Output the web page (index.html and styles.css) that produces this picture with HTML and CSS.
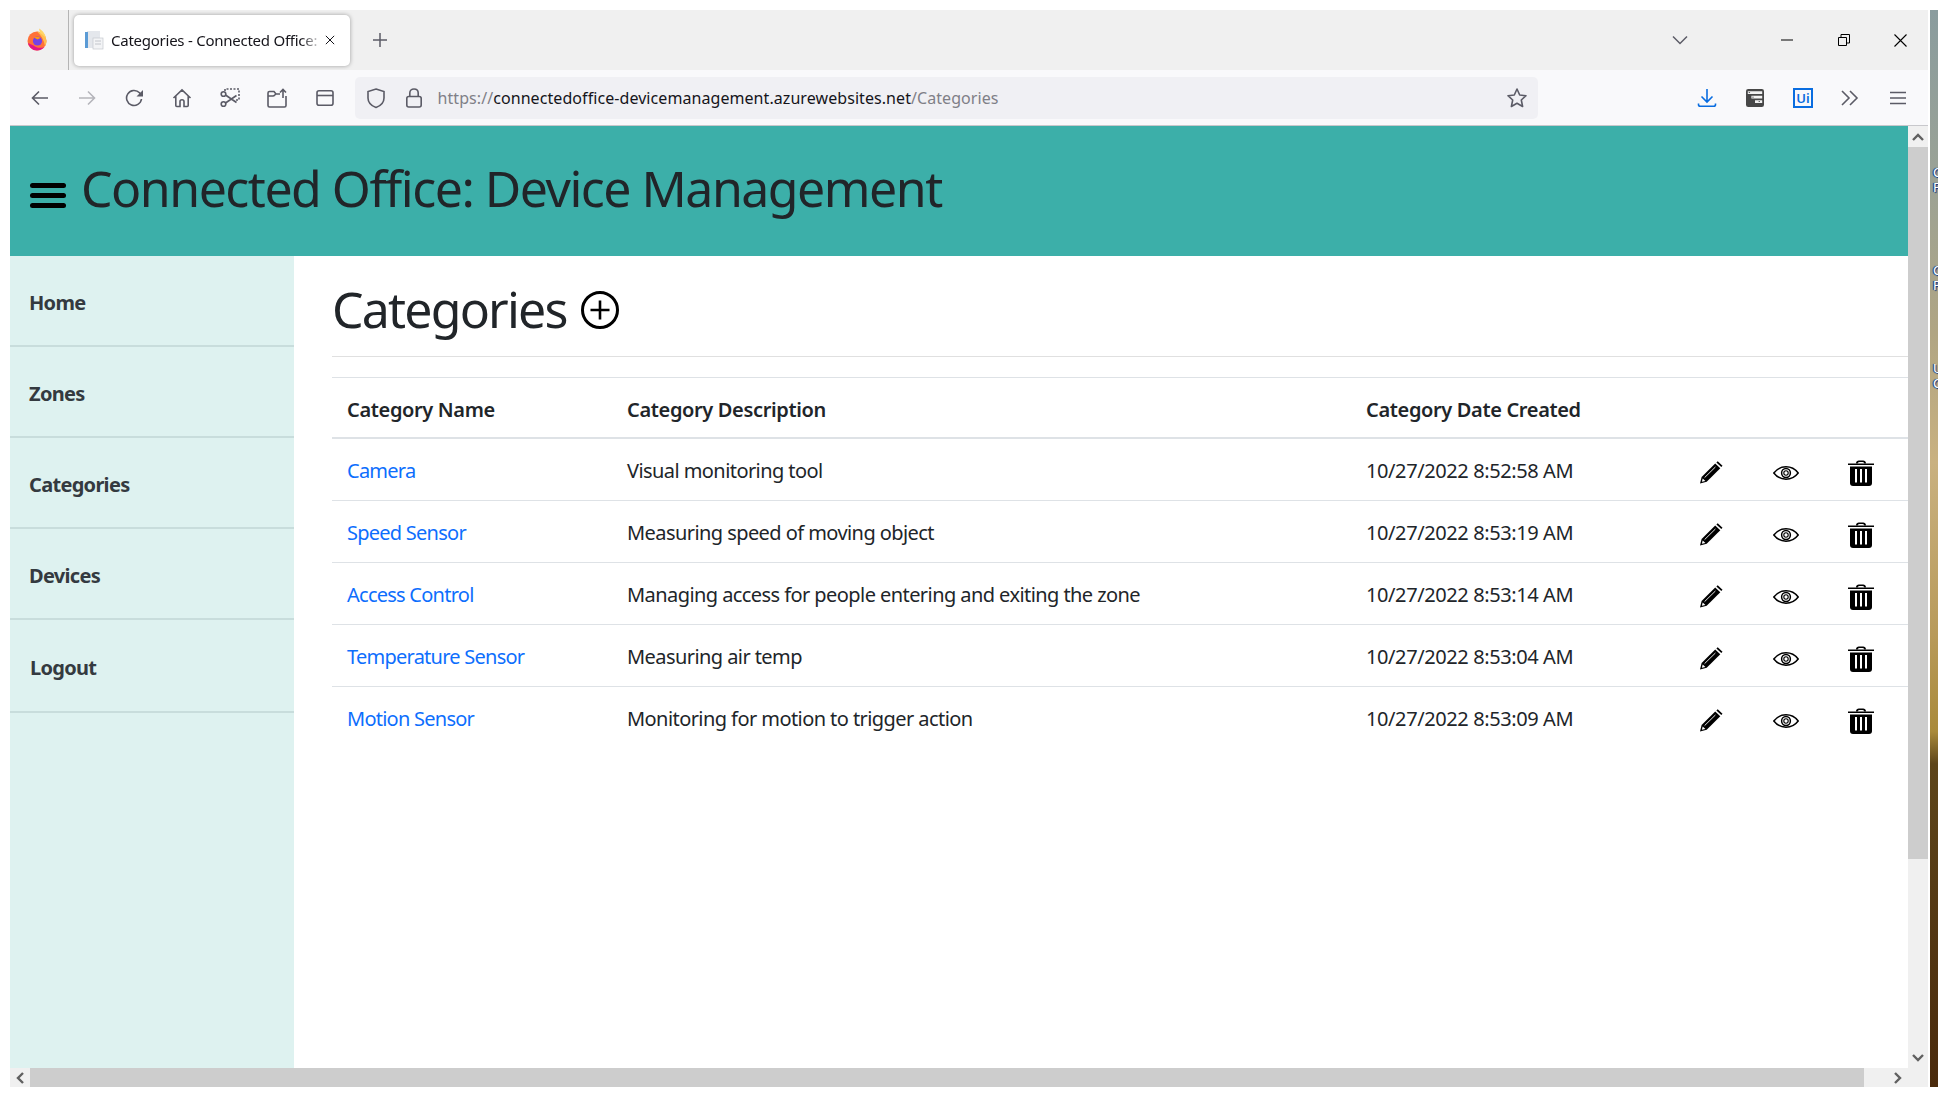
FILE: index.html
```html
<!doctype html>
<html lang="en">
	<head>
		<meta charset="UTF-8">
		<title>Categories - Connected Office: Device Management</title>
		<link rel="stylesheet" href="styles.css">
	</head>
	<body>
		<svg class="defs" width="0" height="0">
			<symbol id="i-pencil" viewBox="0 0 24 23">
				<path d="M1 22.5l1.6-6.6L16.2 2.6l5.1 4.7L7.7 20.8z" fill="#000"/>
				<path d="M2.9 20.8l.8-3.4 2.7 2.5z" fill="#fff"/>
				<path d="M5.6 16.6L16.4 6" stroke="#fff" stroke-width=".9" fill="none"/>
				<path d="M17.4 1.5l1.3-1.2 4.8 4.5-1.2 1.3z" fill="#000"/>
			</symbol>
			<symbol id="i-eye" viewBox="0 0 26 14">
				<path d="M.8 7C4 2.8 8.300 .8 13 .8S22 2.800 25.200 7C22 11.200 17.700 13.200 13 13.200S4 11.200 .8 7z" fill="none" stroke="#000" stroke-width="1.500"/>
				<circle cx="13" cy="7" r="4.400" fill="none" stroke="#000" stroke-width="1.500"/>
				<circle cx="13" cy="7" r="2.200" fill="none" stroke="#000" stroke-width="1.100"/>
			</symbol>
			<symbol id="i-trash" viewBox="0 0 26 26">
				<path d="M0 3.500h26v1.500H0z" fill="#000"/>
				<path d="M8 3.500C8 1 9.500 .5 13 .5s5 .5 5 3h-1.800c0-1.200-1-1.500-3.200-1.500s-3.200 .3-3.200 1.500z" fill="#000"/>
				<path d="M2 6.500h22v16.500c0 2-1 3-3 3H5c-2 0-3-1-3-3z" fill="#000"/>
				<path d="M7 9h2v13.500H7zM12 9h2v13.500h-2zM17 9h2v13.500h-2z" fill="#fff"/>
			</symbol>
		</svg>

		<div class="window">
			<div class="tabbar">
				<svg class="fx" viewBox="0 0 24 24" width="24" height="24">
					<circle cx="12" cy="13" r="9.500" fill="#ff7139"/>
					<path d="M12 3.500a9.500 9.500 0 0 1 9.500 9.500c0 2-.6 3.600-1.500 5-1-6-4-11-8-14.500z" fill="#ffbd4f"/>
					<path d="M14 .5c3.500 2 6.500 5.500 7 10-1.500-2.500-3.500-4-6-5.500z" fill="#ffd567"/>
					<path d="M3 15c1 4 4.500 7.500 9 7.500 3 0 5.500-1.300 7.500-3.500-4 1.500-8 1-11-1.500z" fill="#e31587"/>
					<circle cx="12.500" cy="13" r="4.600" fill="#7542e5"/>
					<path d="M9 9.500c2-1 5-1 6.500 .5l-3 1.500z" fill="#ff980e"/>
				</svg>
				<div class="tab-sep"></div>
				<div class="tab">
					<svg class="favicon" viewBox="0 0 20 20" width="20" height="20">
						<rect x="3" y="1" width="13" height="17" fill="#e4e7ec"/>
						<rect x="1" y="2" width="3" height="16" fill="#5b9bd5"/>
						<rect x="9" y="8" width="10" height="11" fill="#f3f4f6" stroke="#c5c9cf" stroke-width=".7"/>
						<path d="M11 11h6M11 14h6" stroke="#b5bac1" stroke-width=".8"/>
					</svg>
					<span class="tab-title">Categories - Connected Office: Device Management</span>
					<svg class="tab-close" viewBox="0 0 12 12" width="10" height="10"><path d="M1 1l10 10M11 1L1 11" stroke="#15141a" stroke-width="1.200"/></svg>
				</div>
				<svg class="newtab" viewBox="0 0 16 16" width="16" height="16"><path d="M8 1v14M1 8h14" stroke="#5b5b66" stroke-width="1.500"/></svg>
				<div class="spacer"></div>
				<svg class="tablist" viewBox="0 0 16 10" width="16" height="10"><path d="M1 1.500l7 7 7-7" fill="none" stroke="#5b5b66" stroke-width="1.500"/></svg>
				<div class="winbtn"><svg viewBox="0 0 12 12" width="12" height="12"><path d="M0 6h12" stroke="#000"/></svg></div>
				<div class="winbtn nudge"><svg viewBox="0 0 12 12" width="12" height="12"><path d="M.5 3.500h8v8h-8zM3 3.500V.5h8.500V9H8.500" fill="none" stroke="#000"/></svg></div>
				<div class="winbtn nudge"><svg viewBox="0 0 13 13" width="13" height="13"><path d="M.5 .5l12 12M12.500 .5l-12 12" stroke="#000" stroke-width="1.100"/></svg></div>
			</div>

			<div class="toolbar">
				<div class="tb-btn"><svg viewBox="0 0 20 20" width="20" height="20"><path d="M18 10H2.500M9 3.500L2.500 10 9 16.500" class="ln"/></svg></div>
				<div class="tb-btn"><svg viewBox="0 0 20 20" width="20" height="20"><path d="M2 10h15.500M11 3.500l6.500 6.500-6.500 6.500" class="ln dim"/></svg></div>
				<div class="tb-btn"><svg viewBox="0 0 20 20" width="20" height="20"><path d="M16.500 11a7.500 7.500 0 1 1-2-6.200L17 7" class="ln"/><path d="M18 2v6.500h-6.500z" fill="#5b5b66"/></svg></div>
				<div class="tb-btn"><svg viewBox="0 0 20 20" width="20" height="20"><path d="M1.500 10L10 1.800 18.500 10M3.800 8v9.500c0 .6.300 1 1 1h3.200v-5c0-1 .8-1.700 2-1.700s2 .7 2 1.700v5h3.200c.7 0 1-.4 1-1V8" class="ln"/></svg></div>
				<div class="tb-btn"><svg viewBox="0 0 20 20" width="20" height="20"><path d="M5 3V1h14v11h-3" class="ln dash"/><circle cx="3.500" cy="6" r="2.300" class="ln"/><circle cx="3.500" cy="16" r="2.300" class="ln"/><path d="M5.500 7l11 7.500M5.500 15l11-7.500" class="ln"/></svg></div>
				<div class="tb-btn"><svg viewBox="0 0 20 20" width="20" height="20"><path d="M1 17.500V5c0-1 .5-1.500 1.500-1.500H7L9 6h4M1 8h5c.8 0 1.200-.3 1.800-1L9 6M19 8v9.500c0 1-.5 1.500-1.500 1.500h-15C1.500 19 1 18.500 1 17.500" class="ln"/><path d="M16 10V1.500M13 4.500l3-3 3 3" class="ln"/></svg></div>
				<div class="tb-btn"><svg viewBox="0 0 20 20" width="20" height="20"><rect x="2" y="2.800" width="16" height="14.500" rx="2" class="ln"/><path d="M2 7.500h16" class="ln"/></svg></div>
				<div class="urlbar">
					<svg class="url-ico" viewBox="0 0 20 22" width="20" height="22"><path d="M10 2l8 2.500v6.500c0 5-4 8-8 9.500-4-1.500-8-4.500-8-9.500V4.500z" class="ln"/></svg>
					<svg class="url-ico lock" viewBox="0 0 18 22" width="18" height="22"><rect x="1.800" y="9.500" width="14.400" height="10.500" rx="2" class="ln"/><path d="M4.800 9.500V6c0-2.500 1.800-4 4.200-4s4.200 1.500 4.200 4v3.500" class="ln"/></svg>
					<span class="url"><span class="url-dim">https://</span>connectedoffice-devicemanagement.azurewebsites.net<span class="url-dim">/Categories</span></span>
					<svg class="star" viewBox="0 0 22 22" width="22" height="22"><path d="M11 2l2.700 6 6.300.7-4.700 4.300 1.300 6.500-5.600-3.300-5.600 3.300 1.300-6.500L2 8.700 8.300 8z" class="ln" stroke-linejoin="round"/></svg>
				</div>
				<div class="spacer"></div>
				<div class="tb-btn wide"><svg viewBox="0 0 20 20" width="20" height="20"><path d="M10 1v12.500M4.500 8.500l5.500 5.500 5.500-5.500M1.500 15.500v1c0 1 .8 1.800 1.800 1.800h13.400c1 0 1.800-.8 1.800-1.800v-1" fill="none" stroke="#0a6de0" stroke-width="1.600"/></svg></div>
				<div class="tb-btn wide"><svg viewBox="0 0 20 20" width="18" height="18"><rect width="20" height="20" rx="2.500" fill="#474747"/><path d="M2 2.500h16v3H2zM6 7.500h12v3H6zM10 12.500h8v3h-8z" fill="#f2f2f2"/><path d="M3 3.500h1.500v1H3zM7 8.500h1.500v1H7zM14 13.500h1.500v1H14z" fill="#333"/></svg></div>
				<div class="tb-btn wide ui"><span class="ui-badge">Ui</span></div>
				<div class="tb-btn wide"><svg viewBox="0 0 18 16" width="18" height="16"><path d="M1 1l7 7-7 7M9 1l7 7-7 7" class="ln"/></svg></div>
				<div class="tb-btn wide"><svg viewBox="0 0 16 14" width="16" height="14"><path d="M0 1.500h16M0 7h16M0 12.500h16" class="ln"/></svg></div>
			</div>

			<div class="viewport">
				<div class="page">
					<header class="site-head">
						<span class="burger"><i></i><i></i><i></i></span>
						<h1>Connected Office: Device Management</h1>
					</header>
					<div class="cols">
						<nav class="sidebar">
							<a>Home</a>
							<a>Zones</a>
							<a>Categories</a>
							<a>Devices</a>
							<a class="last">Logout</a>
						</nav>
						<main class="content">
							<div class="title-row">
								<h2>Categories</h2>
								<svg class="add" viewBox="0 0 38 38" width="38" height="38"><circle cx="19" cy="19" r="17.500" fill="none" stroke="#000" stroke-width="3"/><path d="M19 9.500v19M9.500 19h19" stroke="#000" stroke-width="2.600"/></svg>
							</div>
							<hr>
							<table>
								<colgroup>
									<col class="c-name"><col class="c-desc"><col class="c-date"><col class="c-act"><col class="c-act"><col class="c-end">
								</colgroup>
								<thead>
									<tr><th>Category Name</th><th>Category Description</th><th>Category Date Created</th><th></th><th></th><th></th></tr>
								</thead>
								<tbody>
									<tr>
										<td class="name"><a>Camera</a></td><td class="desc">Visual monitoring tool</td><td>10/27/2022 8:52:58 AM</td>
										<td class="act"><svg class="pencil"><use href="#i-pencil"/></svg></td>
										<td class="act"><svg class="eye"><use href="#i-eye"/></svg></td>
										<td class="act end"><svg class="trash"><use href="#i-trash"/></svg></td>
									</tr>
									<tr>
										<td class="name"><a>Speed Sensor</a></td><td class="desc">Measuring speed of moving object</td><td>10/27/2022 8:53:19 AM</td>
										<td class="act"><svg class="pencil"><use href="#i-pencil"/></svg></td>
										<td class="act"><svg class="eye"><use href="#i-eye"/></svg></td>
										<td class="act end"><svg class="trash"><use href="#i-trash"/></svg></td>
									</tr>
									<tr>
										<td class="name"><a>Access Control</a></td><td class="desc">Managing access for people entering and exiting the zone</td><td>10/27/2022 8:53:14 AM</td>
										<td class="act"><svg class="pencil"><use href="#i-pencil"/></svg></td>
										<td class="act"><svg class="eye"><use href="#i-eye"/></svg></td>
										<td class="act end"><svg class="trash"><use href="#i-trash"/></svg></td>
									</tr>
									<tr>
										<td class="name"><a>Temperature Sensor</a></td><td class="desc">Measuring air temp</td><td>10/27/2022 8:53:04 AM</td>
										<td class="act"><svg class="pencil"><use href="#i-pencil"/></svg></td>
										<td class="act"><svg class="eye"><use href="#i-eye"/></svg></td>
										<td class="act end"><svg class="trash"><use href="#i-trash"/></svg></td>
									</tr>
									<tr>
										<td class="name"><a>Motion Sensor</a></td><td class="desc">Monitoring for motion to trigger action</td><td>10/27/2022 8:53:09 AM</td>
										<td class="act"><svg class="pencil"><use href="#i-pencil"/></svg></td>
										<td class="act"><svg class="eye"><use href="#i-eye"/></svg></td>
										<td class="act end"><svg class="trash"><use href="#i-trash"/></svg></td>
									</tr>
								</tbody>
							</table>
						</main>
					</div>
				</div>
				<div class="vscroll">
					<div class="sb-btn"><svg viewBox="0 0 12 8" width="12" height="8"><path d="M1 7l5-5 5 5" class="arrow"/></svg></div>
					<div class="vthumb"></div>
					<div class="spacer"></div>
					<div class="sb-btn"><svg viewBox="0 0 12 8" width="12" height="8"><path d="M1 1l5 5 5-5" class="arrow"/></svg></div>
				</div>
				<div class="hscroll">
					<div class="sb-btn"><svg viewBox="0 0 8 12" width="8" height="12"><path d="M7 1L2 6l5 5" class="arrow"/></svg></div>
					<div class="hthumb"></div>
					<div class="spacer"></div>
					<div class="sb-btn"><svg viewBox="0 0 8 12" width="8" height="12"><path d="M1 1l5 5-5 5" class="arrow"/></svg></div>
				</div>
				<div class="corner"></div>
			</div>
		</div>
		<div class="wallpaper">
			<span class="desk-label l1">C</span>
			<span class="desk-label l2">F</span>
			<span class="desk-label l3">C</span>
			<span class="desk-label l4">P</span>
			<span class="desk-label l5">U</span>
			<span class="desk-label l6">C</span>
		</div>
	</body>
</html>
```

FILE: styles.css
```css
*{ margin: 0; padding: 0; box-sizing: border-box; }
html, body{ height: 100%; overflow: hidden; }
body{
	display: flex;
	gap: 2px;
	padding: 10px 0 11px 10px;
	background: #fff;
	color: #212529;
	font-family: "Noto Sans", "Open Sans", sans-serif;
}
.defs{ position: absolute; }
.spacer{ flex: 1; }
.ln{ fill: none; stroke: #5b5b66; stroke-width: 1.6; }
.ln.dim{ stroke: #b5b5bb; }
.ln.dash{ stroke-dasharray: 2 1.5; }

.window{
	display: flex;
	flex-direction: column;
	width: 1918px;
	flex: none;
}
.wallpaper{
	position: relative;
	overflow: hidden;
	width: 8px;
	flex: none;
	background: linear-gradient(#8a9c9e 0, #9aa296 15%, #b0a583 30%, #c9b180 42%, #b89a5a 58%, #a98a3a 67%, #5d451a 70%, #4a2a0c 100%);
}
/* desktop icon labels showing behind the window, only their first letter fits */
.desk-label{
	position: absolute;
	left: 3px;
	color: #fff;
	font-size: 13px;
	line-height: 15px;
	text-shadow: 1px 1px 1px #002a80, -1px 0 1px #002a80;
}
.l1{ top: 155px; }
.l2{ top: 170px; }
.l3{ top: 253px; }
.l4{ top: 268px; }
.l5{ top: 351px; }
.l6{ top: 366px; }

/* tabs */
.tabbar{
	display: flex;
	align-items: center;
	flex: none;
	height: 60px;
	padding-left: 15px;
	background: #f0f0f0;
}
.tab-sep{
	align-self: stretch;
	width: 1px;
	margin: 0 5px 0 19px;
	background: #b4b4b4;
}
.tab{
	display: flex;
	align-items: center;
	width: 276px;
	height: 51px;
	padding: 0 0 0 10px;
	background: #fff;
	border-radius: 5px;
	box-shadow: 0 0 4px rgba(0,0,0,.35);
}
.tab-title{
	width: 211px;
	margin-left: 7px;
	overflow: hidden;
	white-space: nowrap;
	font-size: 15px;
	letter-spacing: -.25px;
	color: #15141a;
	-webkit-mask-image: linear-gradient(to right, #000 90%, transparent);
	mask-image: linear-gradient(to right, #000 90%, transparent);
}
.tab-close{ margin-left: 3px; }
.newtab{ margin-left: 22px; }
.tablist{ margin-right: 70px; }
.winbtn{
	display: flex;
	align-items: center;
	justify-content: center;
	width: 56.6px;
}
.winbtn.nudge{ padding-left: 2px; }

/* nav bar */
.toolbar{
	display: flex;
	align-items: center;
	flex: none;
	height: 56px;
	padding: 0 6px;
	background: #f9f9fb;
	border-bottom: 1px solid #c8c8cc;
}
.tb-btn{
	display: flex;
	align-items: center;
	justify-content: center;
	width: 47.5px;
}
.tb-btn.wide{ width: 48px; }
.tb-btn.ui{ margin-right: -1px; }
.urlbar{
	display: flex;
	align-items: center;
	width: 1183px;
	height: 42px;
	margin-left: 6px;
	padding: 0 10px 0 11px;
	background: #f0f0f4;
	border-radius: 5px;
}
.url-ico.lock{ margin-left: 19px; }
.url{
	margin-left: 15px;
	font-size: 16px;
	letter-spacing: .07px;
	color: #15141a;
	white-space: nowrap;
}
.url-dim{ color: #7f7f87; }
.star{ margin-left: auto; }
.ui-badge{
	width: 20px;
	height: 20px;
	border: 2px solid #0a6de0;
	color: #0a6de0;
	font-size: 13px;
	font-weight: 600;
	line-height: 16px;
	text-align: center;
}

/* page + scrollbars */
.viewport{
	display: grid;
	grid-template-columns: 1898px 20px;
	grid-template-rows: 942px 19px;
	flex: 1;
}
.page{
	display: flex;
	flex-direction: column;
	overflow: hidden;
	background: #fff;
}
.vscroll{
	display: flex;
	flex-direction: column;
	background: #f0f0f0;
}
.hscroll{
	display: flex;
	background: #f0f0f0;
}
.corner{ background: #f0f0f0; }
.sb-btn{
	display: flex;
	align-items: center;
	justify-content: center;
	flex: none;
}
.vscroll .sb-btn{ height: 21px; }
.hscroll .sb-btn{ width: 20px; }
.vthumb{ height: 712px; background: #cdcdcd; }
.hthumb{ width: 1834px; background: #cdcdcd; }
.arrow{ fill: none; stroke: #606060; stroke-width: 2.4; }

.site-head{
	display: flex;
	align-items: center;
	flex: none;
	gap: 15px;
	height: 130px;
	padding: 0 0 7px 20px;
	background: #3cafa9;
}
.burger{
	display: flex;
	flex-direction: column;
	gap: 5px;
	margin-top: 15px;
}
.burger i{
	display: block;
	width: 36px;
	height: 5px;
	background: #000;
	border-radius: 3px;
}
.site-head h1{
	font-size: 50px;
	font-weight: 400;
	letter-spacing: -1.5px;
	line-height: 60px;
}
.cols{
	display: flex;
	flex: 1;
}
.sidebar{
	flex: none;
	width: 284px;
	background: #def2f0;
}
.sidebar a{
	display: block;
	height: 91px;
	padding: 32px 0 0 19px;
	border-bottom: 2px solid #c8dddc;
	color: #343a40;
	font-size: 20px;
	font-weight: 700;
	letter-spacing: -.7px;
	line-height: 30px;
}
.sidebar a.last{ height: 93px; padding: 33px 0 0 20px; }

.content{
	flex: 1;
	padding-left: 38px;
}
.title-row{
	display: flex;
	align-items: center;
	gap: 14px;
	height: 100px;
	padding-top: 5px;
}
.title-row h2{
	font-size: 50px;
	font-weight: 400;
	letter-spacing: -1.8px;
	line-height: 60px;
}
.add{ margin-top: 2px; }
hr{
	height: 1px;
	margin-bottom: 20px;
	border: 0;
	background: #e0e0e0;
}
table{
	width: 1576px;
	table-layout: fixed;
	border-spacing: 0;
	font-size: 20px;
	line-height: 30px;
	letter-spacing: -.4px;
}
.c-name{ width: 280px; }
.c-desc{ width: 739px; }
.c-date{ width: 322px; }
.c-act{ width: 75px; }
.c-end{ width: 85px; }
th{
	padding: 17px 15px 12px;
	border-top: 1px solid #dee2e6;
	border-bottom: 2px solid #dee2e6;
	font-weight: 600;
	letter-spacing: -.35px;
	text-align: left;
}
td{
	padding: 17px 15px 14px;
	border-bottom: 1px solid #dee2e6;
	white-space: nowrap;
}
tbody tr:last-child td{ border-bottom: 0; }
td.desc{ letter-spacing: -.57px; }
td.name{ letter-spacing: -.75px; }
td a{ color: #0d6efd; }
td.act{
	padding: 6px 0 0;
	line-height: 0;
	letter-spacing: 0;
	text-align: center;
	vertical-align: middle;
}
td.act.end{ padding-right: 10px; }
.pencil{ width: 24px; height: 23px; }
.eye{ width: 26px; height: 14px; }
.trash{ width: 26px; height: 26px; }
```
